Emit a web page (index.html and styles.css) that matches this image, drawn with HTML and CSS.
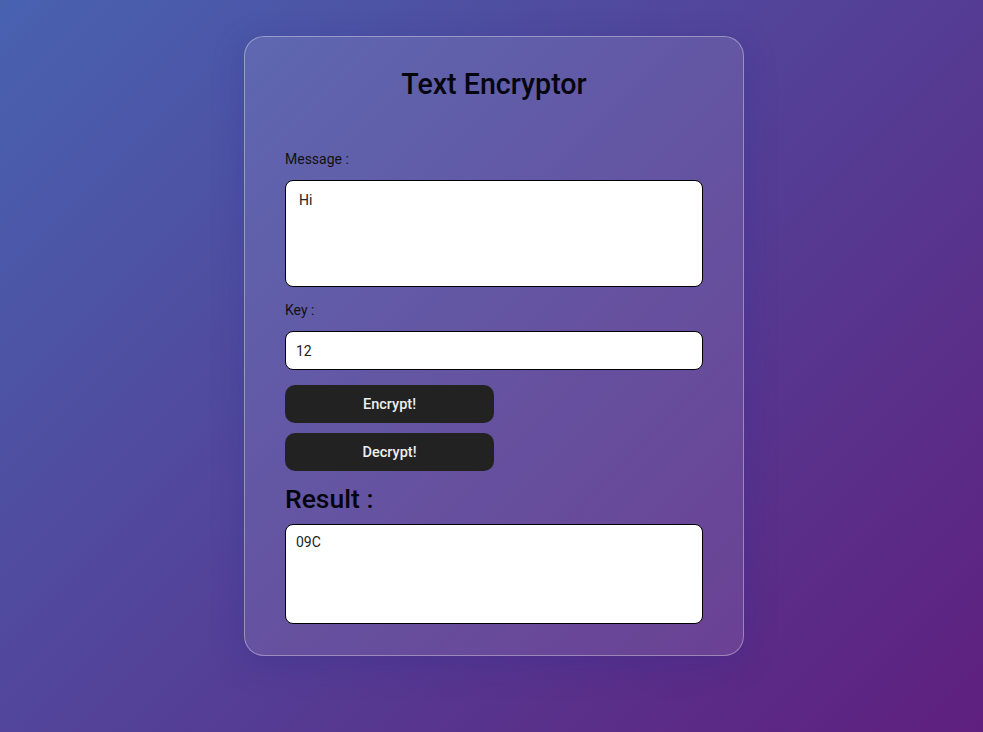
FILE: index.html
```html
<!DOCTYPE html>
<html>
<head>
<meta charset="utf-8">
<link rel="stylesheet" href="styles.css">
</head>
<body>
<div class="card">
  <h1 class="title">Text Encryptor</h1>
  <div class="form">
    <label class="label">Message :</label>
    <textarea class="message">Hi</textarea>
    <label class="label key-label">Key :</label>
    <input class="key" type="text" value="12">
    <button class="btn">Encrypt!</button>
    <button class="btn">Decrypt!</button>
    <h2 class="result-title">Result :</h2>
    <textarea class="result">09C</textarea>
  </div>
</div>
</body>
</html>
```
FILE: styles.css
```css
html, body {
  margin: 0;
  height: 100%;
}
body {
  background: linear-gradient(135deg, #4862b0 0%, #5f1f7e 100%);
  font-family: Roboto, "Noto Sans", sans-serif;
  display: flex;
  justify-content: center;
  align-items: flex-start;
  padding-left: 5px;
  box-sizing: border-box;
}
.card {
  margin-top: 36px;
  width: 418px;
  padding: 30px 40px 31px 40px;
  border: 1px solid rgba(255,255,255,0.35);
  border-radius: 20px;
  background: rgba(255,255,255,0.1);
  box-shadow: 0 8px 32px rgba(31,38,135,0.25);
}
.title {
  margin: 0;
  text-align: center;
  font-size: 28.6px;
  font-weight: 500;
  color: #05050f;
  line-height: 34px;
}
.form {
  display: flex;
  flex-direction: column;
  margin-top: 50px;
}
.label {
  font-size: 14px;
  color: #111;
  line-height: 16px;
  margin-bottom: 13px;
}
.key-label {
  margin-top: 15px;
}
.message, .result, .key {
  box-sizing: border-box;
  width: 418px;
  border: 1px solid #000;
  border-radius: 8px;
  background: #fff;
  font-family: Roboto, sans-serif;
  font-size: 14px;
  color: #222;
  resize: none;
  margin: 0;
  outline: none;
}
.message {
  height: 107px;
  padding: 11px 13px;
}
.key {
  height: 39px;
  padding: 0 10px;
  margin-bottom: 15px;
}
.btn {
  width: 209px;
  height: 38px;
  border: none;
  border-radius: 10px;
  background: #222;
  color: #eee;
  font-family: Roboto, sans-serif;
  font-size: 14.5px;
  font-weight: 500;
  margin-bottom: 10px;
  padding: 0;
}
.result-title {
  margin: 3px 0 10px;
  font-size: 26.5px;
  font-weight: 500;
  line-height: 30px;
  color: #05050f;
}
.result {
  height: 100px;
  padding: 9px 10px;
}
```
